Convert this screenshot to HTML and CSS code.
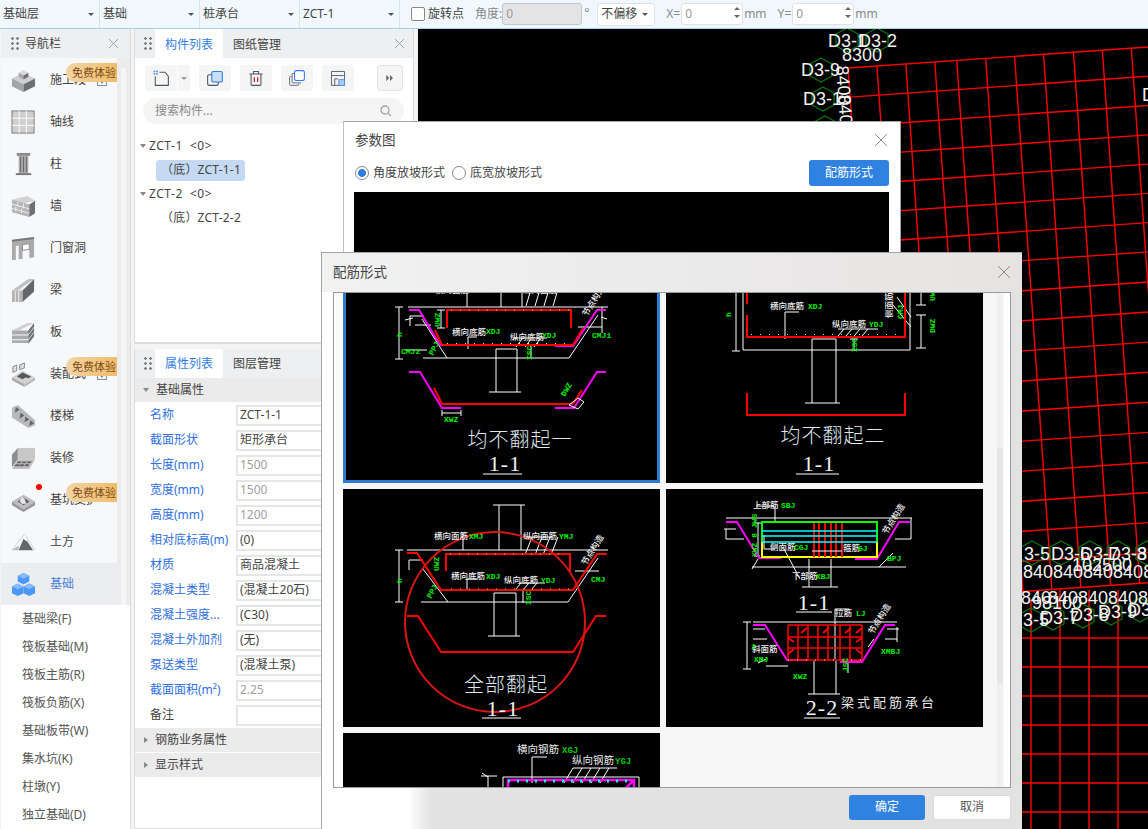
FILE: index.html
```html
<!DOCTYPE html>
<html lang="zh-CN">
<head>
<meta charset="utf-8">
<title>基础</title>
<link rel="stylesheet" href="styles.css">
</head>
<body>
<div class="app">
  <header class="topbar">
    <div class="sel">基础层<i class="caret"></i></div>
    <div class="sel">基础<i class="caret"></i></div>
    <div class="sel">桩承台<i class="caret"></i></div>
    <div class="sel">ZCT-1<i class="caret"></i></div>
    <span class="check"></span><span class="tlabel">旋转点</span>
    <span class="tlabel muted angle">角度:</span><span class="tinput disabled">0</span><span class="deg muted">°</span>
    <div class="offset">不偏移<i class="caret"></i></div>
    <span class="tlabel muted xl">X=</span>
    <span class="tinput spin">0<b class="spinner"><i></i><i></i></b></span><span class="muted unit">mm</span>
    <span class="tlabel muted yl">Y=</span>
    <span class="tinput spin">0<b class="spinner"><i></i><i></i></b></span><span class="muted unit">mm</span>
  </header>
  <main class="main">
    <aside class="nav">
      <div class="phead navhead"><span class="grip"></span><span class="ptitle">导航栏</span><span class="x"></span></div>
      <div class="navbody">
        <div class="navlist">
          <div class="navitem"><svg class="ni" viewBox="0 0 26 26"><path d="M1 11l12-6 12 6-12 6z" fill="#cfcfcf"/><path d="M1 11l12 6v8L1 19z" fill="#a5a5a5"/><path d="M25 11l-12 6v8l12-6z" fill="#6c6f74"/><path d="M8 5l5-3 5 3-5 3z" fill="#d8d8d8"/><path d="M8 5l5 3v4L8 9z" fill="#a5a5a5"/><path d="M18 5l-5 3v4l5-3z" fill="#6c6f74"/></svg><span>施工段</span><svg class="lock" viewBox="0 0 14 14"><rect x="1" y="5" width="12" height="8.500" fill="none" stroke="#5b6270"/><path d="M4 5V3a3 3 0 0 1 6 0v2" fill="none" stroke="#5b6270"/><circle cx="7" cy="9" r="1.300" fill="#5b6270"/></svg><em class="badge">免费体验</em></div>
          <div class="navitem"><svg class="ni" viewBox="0 0 26 26"><rect x="1" y="1" width="23" height="23" fill="#cfcfcf" stroke="#7a7a7a"/><path d="M8.500 1v23M16 1v23M1 8.500h23M1 16h23" stroke="#fff"/></svg><span>轴线</span></div>
          <div class="navitem"><svg class="ni" viewBox="0 0 26 26"><path d="M6 1h14v3H6z" fill="#8a8a8a"/><path d="M8 4h10v18H8z" fill="#a9a9a9"/><path d="M10 5v16M13 5v16M16 5v16" stroke="#666"/><path d="M5 22h16v2H5z" fill="#777"/></svg><span>柱</span></div>
          <div class="navitem"><svg class="ni" viewBox="0 0 26 26"><path d="M1 6l16-4 8 5-16 4z" fill="#d2d2d2"/><path d="M1 6l18 5v13L1 19z" fill="#b5b5b5"/><path d="M19 11l6-4v13l-6 4z" fill="#6c6f74"/><path d="M1 10.500l18 5M1 15l18 5M7 8v5M13 10v5M5 13v5M11 15v5" stroke="#eee"/></svg><span>墙</span></div>
          <div class="navitem"><svg class="ni" viewBox="0 0 26 26"><path d="M1 5l23-3v20l-5 1V8l-7 1v15H8V10L5 10.500V25L1 25z" fill="#aaa"/><path d="M12 9l7-1v6l-7 1z" fill="#fff" stroke="#8a8a8a"/><path d="M1 5l23-3" stroke="#777" stroke-width="2"/></svg><span>门窗洞</span></div>
          <div class="navitem"><svg class="ni" viewBox="0 0 26 26"><path d="M1 13L18 1h6L7 13z" fill="#c0c0c0"/><path d="M1 13h11v12H1z" fill="#b4b4b4"/><path d="M12 13L24 1v13L12 25z" fill="#63666b"/><path d="M4.500 13v12M8 13v12" stroke="#eee"/></svg><span>梁</span></div>
          <div class="navitem"><svg class="ni" viewBox="0 0 26 26"><path d="M1 11l16-8h7L8 11z" fill="#cfcfcf"/><path d="M1 11h17v4H1zM1 16h17v4H1zM1 21h17v3H1z" fill="#aaa"/><path d="M18 11l6-8v4l-6 8zM18 16l6-8v4l-6 8zM18 21l6-8v4l-6 8z" fill="#6c6f74"/></svg><span>板</span></div>
          <div class="navitem"><svg class="ni" viewBox="0 0 26 26"><path d="M1 16l11-7 13 7-11 7z" fill="#d2d2d2"/><path d="M1 16v3l13 7v-3z" fill="#aaa"/><path d="M25 16v3l-11 7v-3z" fill="#bbb"/><path d="M6 15l6-4 9 4-3 2-3-1-3 2z" fill="#55585d"/><path d="M2 5l4-2v6l-4 2zM9 3l5-2v5L9 8z" fill="#ddd" stroke="#888"/></svg><span>装配式</span><svg class="lock" viewBox="0 0 14 14"><rect x="1" y="5" width="12" height="8.500" fill="none" stroke="#5b6270"/><path d="M4 5V3a3 3 0 0 1 6 0v2" fill="none" stroke="#5b6270"/><circle cx="7" cy="9" r="1.300" fill="#5b6270"/></svg><em class="badge">免费体验</em></div>
          <div class="navitem"><svg class="ni" viewBox="0 0 26 26"><path d="M1 4l6-3 18 16v5l-7 3L1 14z" fill="#b9b9b9"/><path d="M5 3l4 3-5 3zM10 9l4 3-5 3zM15 13l4 3-5 3zM20 17l4 3-5 3z" fill="#63666b"/></svg><span>楼梯</span></div>
          <div class="navitem"><svg class="ni" viewBox="0 0 26 26"><path d="M7 2h18v12H7z" fill="#c7c7c7"/><path d="M7 2L1 9v13l6-8z" fill="#8d8d8d"/><path d="M7 14h18l-6 10H1z" fill="#c0c0c0"/><path d="M7 16h4l-1 2H6zM12 16h4l-1 2h-4zM17 16h5l-2 2h-4zM5 19h4l-1 2H3zM10 19h4l-1 2H8zM15 19h4l-1 2h-4z" fill="#5f6267"/></svg><span>装修</span></div>
          <div class="navitem"><i class="dot"></i><svg class="ni" viewBox="0 0 26 26"><path d="M1 14l12-7 12 7-12 8z" fill="#bdbdbd"/><path d="M1 14v4l12 7v-3zM25 14v4l-12 7v-3z" fill="#999"/><path d="M7 14l6-4 6 4-6 4z" fill="#55585d"/><path d="M11 9l3 2 2 5-4 1-3-3z" fill="#e4e4e4"/></svg><span>基坑支护</span><em class="badge">免费体验</em></div>
          <div class="navitem"><svg class="ni" viewBox="0 0 26 26"><path d="M1 21L14 4l11 17" fill="none" stroke="#cfcfcf"/><path d="M8 21l5-12 4 3 6 9z" fill="#64676c"/><path d="M1 21l7-5v5z" fill="#bcbcbc"/><path d="M13 9l1-5 3 8z" fill="#fff"/></svg><span>土方</span></div>
          <div class="navitem active"><svg class="ni" viewBox="0 0 26 26"><path d="M13 1l6 3v6l-6 3-6-3V4z" fill="#4b97f5"/><path d="M7 12l6 3v7l-6 3-6-3v-7z" fill="#4b97f5"/><path d="M19 12l6 3v7l-6 3-6-3v-7z" fill="#4b97f5"/><path d="M13 7l6-3-6-3-6 3zM7 18l6-3-6-3-6 3zM19 18l6-3-6-3-6 3z" fill="#86bbfa"/></svg><span>基础</span></div>
        </div>
        <div class="track"><div class="thumb"></div></div>
      </div>
      <ul class="sublist">
        <li>基础梁(F)</li><li>筏板基础(M)</li><li>筏板主筋(R)</li><li>筏板负筋(X)</li><li>基础板带(W)</li><li>集水坑(K)</li><li>柱墩(Y)</li><li>独立基础(D)</li>
      </ul>
    </aside>

    <div class="midcol">
      <section class="panel listpanel">
        <div class="phead"><span class="grip"></span><span class="tab on">构件列表</span><span class="tab">图纸管理</span><span class="x"></span></div>
        <div class="tools">
          <div class="tbtn split"><svg viewBox="0 0 22 22"><path d="M9 4h7l4 5v11H4V9" fill="none" stroke="#4a5568" stroke-width="1.300"/><path d="M2 2h5v5H2z" fill="#4a90e2"/><path d="M4.500 2v5M2 4.500h5" stroke="#fff"/></svg></div>
          <div class="tbtn arrowpart"><i class="caret"></i></div>
          <div class="tbtn"><svg viewBox="0 0 22 22"><rect x="7" y="3" width="13" height="13" rx="2" fill="#c9ddf5" stroke="#2f7de0" stroke-width="1.300"/><path d="M7 7H4a2 2 0 0 0-2 2v9a2 2 0 0 0 2 2h9a2 2 0 0 0 2-2v-2" fill="none" stroke="#4a5568" stroke-width="1.300"/></svg></div>
          <div class="tbtn"><svg viewBox="0 0 22 22"><path d="M3 6h16M8 6V3h6v3" fill="none" stroke="#4a5568" stroke-width="1.300"/><path d="M5 6v13a1 1 0 0 0 1 1h10a1 1 0 0 0 1-1V6" fill="none" stroke="#4a5568" stroke-width="1.300"/><path d="M9 10v6M13 10v6" stroke="#e02020" stroke-width="1.500"/></svg></div>
          <div class="tbtn"><svg viewBox="0 0 22 22"><rect x="8" y="2" width="12" height="12" rx="2" fill="#fff" stroke="#2f7de0" stroke-width="1.300"/><path d="M8 5.500H6a1 1 0 0 0-1 1V16a1 1 0 0 0 1 1h10" fill="none" stroke="#4a5568"/><path d="M4 9H3a1 1 0 0 0-1 1v9a1 1 0 0 0 1 1h9a1 1 0 0 0 1-1v-1" fill="none" stroke="#4a5568"/></svg></div>
          <div class="tbtn"><svg viewBox="0 0 22 22"><path d="M3 3h16v17H3z" fill="none" stroke="#4a5568" stroke-width="1.100"/><path d="M3 8h15" fill="none" stroke="#4a5568" stroke-width="1.100"/><path d="M7 20v-8h4" fill="none" stroke="#4a5568" stroke-width="1.100"/><rect x="12" y="13" width="7" height="7" fill="#a8c9f0" stroke="#4a90e2"/></svg></div>
          <div class="tbtn more"><svg viewBox="0 0 10 8"><path d="M0 0l4 4-4 4zM5 0l4 4-4 4z" fill="#666"/></svg></div>
        </div>
        <div class="search"><span>搜索构件...</span><svg viewBox="0 0 12 12" width="12" height="12"><circle cx="5" cy="5" r="4" fill="none" stroke="#a5a5a5" stroke-width="1.300"/><path d="M8 8l3 3" stroke="#a5a5a5" stroke-width="1.300"/></svg></div>
        <div class="tree">
          <div class="tnode"><i class="tri"></i>ZCT-1&nbsp;&nbsp;&lt;0&gt;</div>
          <div class="tleaf sel-leaf">（底）ZCT-1-1</div>
          <div class="tnode"><i class="tri"></i>ZCT-2&nbsp;&nbsp;&lt;0&gt;</div>
          <div class="tleaf">（底）ZCT-2-2</div>
        </div>
      </section>
      <section class="panel proppanel">
        <div class="phead"><span class="grip"></span><span class="tab on">属性列表</span><span class="tab">图层管理</span></div>
        <div class="group"><i class="tri"></i>基础属性</div>
        <div class="rows">
          <div class="row"><label>名称</label><span class="val">ZCT-1-1</span></div>
          <div class="row"><label>截面形状</label><span class="val">矩形承台</span></div>
          <div class="row"><label>长度(mm)</label><span class="val off">1500</span></div>
          <div class="row"><label>宽度(mm)</label><span class="val off">1500</span></div>
          <div class="row"><label>高度(mm)</label><span class="val off">1200</span></div>
          <div class="row"><label>相对底标高(m)</label><span class="val">(0)</span></div>
          <div class="row"><label>材质</label><span class="val">商品混凝土</span></div>
          <div class="row"><label>混凝土类型</label><span class="val">(混凝土20石)</span></div>
          <div class="row"><label>混凝土强度...</label><span class="val">(C30)</span></div>
          <div class="row"><label>混凝土外加剂</label><span class="val">(无)</span></div>
          <div class="row"><label>泵送类型</label><span class="val">(混凝土泵)</span></div>
          <div class="row"><label>截面面积(m²)</label><span class="val off">2.25</span></div>
          <div class="row"><label class="plain">备注</label><span class="val"></span></div>
        </div>
        <div class="group closed"><i class="tri side"></i>钢筋业务属性</div>
        <div class="group closed"><i class="tri side"></i>显示样式</div>
      </section>
    </div>

    <div class="canvas">
      <svg class="cad" viewBox="418 29 730 800" width="730" height="800">
        <g class="grid" transform="rotate(-4 848 68)">
          <path d="M848 68H1175M848 97.200H1175M848 126.400H1175M848 155.600H1175M848 184.800H1175M848 214H1175M848 243.200H1175M848 272.400H1175M848 302.400H1175M848 332.400H1175M848 362.400H1175M848 392.400H1175M848 422.400H1175M848 452.400H1175M848 482.400H1175M848 512.400H1175M848 542.400H1175M848 572.400H1175M848 602.400H1175"/>
          <path d="M848 68V602M877 68V602M906 68V602M935 68V602M957 68V602M986 68V602M1015 68V602M1044 68V602M1074 68V602M1103 68V602M1132 68V602M1161 68V602"/>
        </g>
        <path class="grid" d="M1000 638H1148M1000 667H1148M1000 696H1148M1000 725H1148M1000 754H1148M1000 783H1148M1000 812H1148M1031 600V829M1060 590V829M1089 590V829M1118 590V829"/>
        <g class="hex">
          <polygon points="847,28 858,34 858,46 847,52 836,46 836,34"/>
          <polygon points="877,28 888,34 888,46 877,52 866,46 866,34"/>
          <polygon points="821,58 832,64 832,76 821,82 810,76 810,64"/>
          <polygon points="823,87 834,93 834,105 823,111 812,105 812,93"/>
          <polygon points="825,116 836,122 836,134 825,140 814,134 814,122"/>
          <polygon points="1032,541 1043,547 1043,559 1032,565 1021,559 1021,547"/>
          <polygon points="1061,541 1072,547 1072,559 1061,565 1050,559 1050,547"/>
          <polygon points="1090,541 1101,547 1101,559 1090,565 1079,559 1079,547"/>
          <polygon points="1118,541 1129,547 1129,559 1118,565 1107,559 1107,547"/>
          <polygon points="1147,541 1158,547 1158,559 1147,565 1136,559 1136,547"/>
          <polygon points="1031,608 1042,614 1042,626 1031,632 1020,626 1020,614"/>
          <polygon points="1053,606 1064,612 1064,624 1053,630 1042,624 1042,612"/>
          <polygon points="1083,604 1094,610 1094,622 1083,628 1072,622 1072,610"/>
          <polygon points="1111,601 1122,607 1122,619 1111,625 1100,619 1100,607"/>
          <polygon points="1140,598 1151,604 1151,616 1140,622 1129,616 1129,604"/>
        </g>
        <g class="cadtxt">
          <text x="828" y="47">D3-1</text><text x="858" y="47">D3-2</text>
          <text x="842" y="61">8300</text>
          <text x="801" y="76">D3-9</text><text x="803" y="105">D3-1</text>
          <text transform="translate(836 66) rotate(86)">8400</text>
          <text transform="translate(838 95) rotate(86)">8400</text>
          <text x="1142" y="101">D</text>
          <text x="1024" y="560">3-5</text><text x="1051" y="560">D3-6</text><text x="1080" y="560">D3-7</text><text x="1108" y="560">D3-8</text><text x="1137" y="560">3</text>
          <text x="1023" y="578">84084084084084084</text>
          <text x="1072" y="571">102500</text>
          <text x="1021" y="604">840</text><text x="1048" y="604">8408408408408</text>
          <text x="1032" y="609">98100</text>
          <text x="1023" y="626">3-5</text><text x="1040" y="624">D3-7</text><text x="1070" y="621">D3-8</text><text x="1098" y="618">D3-9</text><text x="1128" y="616">D3-</text>
        </g>
      </svg>
    </div>
  </main>

  <div class="dlg param">
    <div class="dlgtitle">参数图<span class="x big"></span></div>
    <div class="paramopts">
      <span class="radio on"></span><span>角度放坡形式</span>
      <span class="radio"></span><span>底宽放坡形式</span>
      <button class="btn primary form">配筋形式</button>
    </div>
    <div class="blackbox"></div>
  </div>

  <div class="dlg forms">
    <div class="dlgtitle">配筋形式<span class="x big"></span></div>
    <div class="listbox">
      <div class="gallery">
        <div class="card picked">
          <svg class="draw" viewBox="0 0 317 238">
            <path class="w" d="M65 62H265M158 0V62M179 0V62"/>
            <path class="w" d="M124 46v16M183 40h50M183 61l6-20M192 61l6-20M201 61l6-20M210 61l6-20"/>
            <path class="w" d="M56 62V114M52 62h8M52 114h8M67 71h14M67 81V71M79 74l25 39M80 113H226M226 113l29-43M235 82h24M259 62v26M258 72l6 2M62 75l8-2M98 65v18M94 65h8M94 83h8M72 80h16M62 105h22"/>
            <path class="w" d="M153 104H174M153 104V147M174 104V147M146 147H178M188 100v12M184 100h8"/>
            <path class="w" d="M125 92h9M125 92v12M173 102l6-8M182 102l6-8M191 102l6-8M170 93h34"/>
            <path class="m" d="M66 65H76L97 100H118M212 101H230L254 65H263"/>
            <path class="r" d="M104 83V65H228V83M99 100H230M92 85l7 15M230 100l10-17"/>
            <path class="yd" d="M104 98.500H228M108 65h118"/>
            <path class="m" d="M66 127H77L99 163H118M212 163H231L254 127H263"/>
            <path class="r" d="M99 159H230M91 143l8 16M230 159l9-14"/>
            <path class="w" d="M99 165v6M118 165v6M99 168H118M226 160l9-7 6 4-6 7z"/>
            <path class="w" d="M140 229H179"/>
            <text class="tw" x="92" y="48">横向面筋</text><text class="tg" x="131" y="48">XMJ</text>
            <text class="tw" x="180" y="48">纵向面筋</text><text class="tg" x="216" y="48">YMJ</text>
            <text class="tw" transform="translate(244 72) rotate(-58)">节点构造</text>
            <text class="tw" x="109" y="90">横向底筋</text><text class="tg" x="143" y="89">XDJ</text>
            <text class="tw" x="167" y="95">纵向底筋</text><text class="tg" x="199" y="93">YDJ</text>
            <text class="tg" x="58" y="109">CMJ2</text><text class="tg" x="249" y="93">CMJ1</text>
            <text class="tg" transform="translate(59 92) rotate(-90)">h</text>
            <text class="tg" transform="translate(97 82) rotate(-90)">UWZ</text>
            <text class="tg" transform="translate(189 115) rotate(-90)">ISC</text>
            <text class="tg" transform="translate(90 111) rotate(-62)">PPJ</text>
            <text class="tg" x="101" y="177">XWZ</text>
            <text class="tg" transform="translate(222 152) rotate(-60)">DWZ</text>
            <text class="title" x="177" y="202">均不翻起一</text>
            <text class="secno" x="162" y="226">1-1</text>
          </svg>
        </div>
        <div class="card">
          <svg class="draw" viewBox="0 0 317 238">
            <path class="w" d="M77 0V105H244V0M146 94H170M146 94V158M170 94V158M139 158H174M70 0V106M66 106h8M119 67h14M119 67V94M184 94h8M188 94v12M227 60l18 22M231 52l14 20M250 70h10M255 70v33M250 103h10M250 60h10M255 40v20M172 91l6-7M180 91l6-7M188 91l6-7M196 91l6-7M172 84h40"/>
            <path class="r" d="M81 48V59M81 70V92H239V48M239 70V80M81 148V170H239V148"/>
            <path class="yd" d="M85 89.500H236"/>
            <path class="w" d="M130 229H173"/>
            <text class="tw" x="104" y="64">横向底筋</text><text class="tg" x="142" y="64">XDJ</text>
            <text class="tw" x="166" y="82">纵向底筋</text><text class="tg" x="203" y="82">YDJ</text>
            <text class="tw" transform="translate(226 73) rotate(-90)">侧面筋</text>
            <text class="tg" transform="translate(237 74) rotate(-90)">CMJ</text>
            <text class="tg" transform="translate(269 88) rotate(-90)">DWZ</text>
            <text class="tg" transform="translate(269 56) rotate(-90)">UWZ</text>
            <text class="tg" transform="translate(65 72) rotate(-90)">h</text>
            <text class="tg" transform="translate(191 107) rotate(-90)">ISC</text>
            <text class="title" x="167" y="198">均不翻起二</text>
            <text class="secno" x="153" y="226">1-1</text>
          </svg>
        </div>
        <div class="card">
          <svg class="draw" viewBox="0 0 317 238">
            <path class="w" d="M64 61H265M156 16V61M178 16V61M150 16H182M120 44v17M182 48h28M182 66l7-18M192 66l7-18M200 66l7-18M208 66l7-18"/>
            <path class="w" d="M56 61V113M52 61h8M52 113h8M66 71h14M66 81V71M80 80l25 33M78 113H225M225 113l30-44M151 104H173M151 104V147M173 104V147M145 147H177M180 102v12M232 82h24"/>
            <path class="w" d="M124 90h10M124 90v12M172 101l6-7M180 101l6-7M188 101l6-7M176 94h26"/>
            <path class="r" d="M64 64H74L98 101H230L254 65H264M103 82V65H227V82M64 127H75L98 163H230L253 127H263"/>
            <path class="yd" d="M107 65H224M108 100H226"/>
            <circle class="ring" cx="152" cy="133" r="90"/>
            <path class="w" d="M139 229H178"/>
            <text class="tw" x="91" y="50">横向面筋</text><text class="tg" x="126" y="50">XMJ</text>
            <text class="tw" x="180" y="50">纵向面筋</text><text class="tg" x="216" y="50">YMJ</text>
            <text class="tw" transform="translate(243 77) rotate(-58)">节点构造</text>
            <text class="tw" x="108" y="90">横向底筋</text><text class="tg" x="143" y="90">XDJ</text>
            <text class="tw" x="161" y="94">纵向底筋</text><text class="tg" x="198" y="94">YDJ</text>
            <text class="tg" x="248" y="93">CMJ</text>
            <text class="tg" transform="translate(59 94) rotate(-90)">h</text>
            <text class="tg" transform="translate(96 82) rotate(-90)">UWZ</text>
            <text class="tg" transform="translate(188 116) rotate(-90)">ISC</text>
            <text class="tg" transform="translate(88 110) rotate(-62)">PPJ</text>
            <text class="title" x="163" y="203">全部翻起</text>
            <text class="secno" x="160" y="227">1-1</text>
          </svg>
        </div>
        <div class="card">
          <svg class="draw" viewBox="0 0 317 238">
            <path class="w" d="M60 29H246M109 17v16M90 17h18M58 40h12M60 50V40M60 50h18M92 34V67M88 34h8M88 67h6M98 46v14h11M86 80l6-10M86 78H240M213 78l14-14M229 50h16M245 50V29M143 70V98M165 70V98M136 98H172M118 60l16 30"/>
            <path class="m" d="M60 33H71L93 69H115M189 70H211L233 33H244"/>
            <path class="yl" d="M96 53V68H211V53"/>
            <path class="bar" d="M148 32V68M153 32V68M159 32V68M165 32V68M170 32V68M176 32V68"/>
            <path class="gn" d="M96 53V33H211V53"/>
            <path class="cy" d="M96 42H211M96 47H211M96 53H211"/>
            <path class="w" d="M130 123H166M146 62h30"/>
            <path class="w" d="M87 133H231M81 133V180M77 133h8M77 180h8M87 140h12M87 150h14M92 174l8-4M100 177H122M114 160l8 12M208 150l-6 8M219 150h12M195 172h-10M148 172V205M170 172V205M142 205H174M182 172v12M221 140h12M231 138v15"/>
            <path class="w" d="M169 135V170M169 120h14M169 120v15"/>
            <path class="m" d="M87 136H99L121 171H142M174 173H196L219 136H229"/>
            <path class="gridr" d="M122 136H196M122 148H196M122 159H196M122 171H196M122 136V171M132 136V171M142 136V171M152 136V171M162 136V171M174 136V171M184 136V171M196 136V171"/>
            <path class="bar" d="M135 144l6-5M157 144l6-5M179 144l6-5M190 144l6-5M122 149l6 4M190 153l6-4M122 165l6-5M190 160l6 5"/>
            <path class="yd" d="M122 171H196"/>
            <path class="w" d="M138 229H174"/>
            <text class="tw" x="87" y="19">上部筋</text><text class="tg" x="115" y="19">SBJ</text>
            <text class="tw" x="104" y="61">侧面筋</text><text class="tg" x="128" y="61">CGJ</text>
            <text class="tw" x="177" y="62">箍筋</text><text class="tg" x="192" y="62">GJ</text>
            <text class="tw" x="126" y="90">下部筋</text><text class="tg" x="150" y="90">XBJ</text>
            <text class="tg" x="221" y="72">BPJ</text>
            <text class="tw" transform="translate(221 46) rotate(-58)">节点构造</text>
            <text class="tg" transform="translate(91 68) rotate(-90)">XWZ 8 JWS</text>
            <text class="tw" x="169" y="127">拉筋</text><text class="tg" x="190" y="127">LJ</text>
            <text class="tw" transform="translate(207 146) rotate(-58)">节点构造</text>
            <text class="tw" x="86" y="163">斜面筋</text><text class="tg" x="88" y="173">XMJ</text>
            <text class="tg" x="215" y="165">XMBJ</text>
            <text class="tg" x="127" y="190">XWZ</text>
            <text class="tg" transform="translate(182 183) rotate(-90)">JSC</text>
            <text class="tg" transform="translate(85 160)">1</text>
            <text class="name" x="175" y="218">梁式配筋承台</text>
            <text class="secno" x="148" y="121">1-1</text>
            <text class="secno" x="156" y="226">2-2</text>
          </svg>
        </div>
        <div class="card">
          <svg class="draw" viewBox="0 0 317 238">
            <path class="w" d="M160 70V44H296V70M189 24H204M189 24V50M230 35H274M221 50l9-15M230 50l9-15M239 50l9-15M248 50l9-15M257 50l9-15M138 43h16M145 43V70M139 40l6 4"/>
            <path class="mg" d="M165 62V47H291V62M282 56l8-8"/>
            <path class="cd" d="M165 48H291"/>
            <text class="tl" x="174" y="20">横向钢筋</text><text class="tgl" x="219" y="20">XGJ</text>
            <text class="tl" x="229" y="31">纵向钢筋</text><text class="tgl" x="272" y="31">YGJ</text>
          </svg>
        </div>
      </div>
      <div class="vscroll"><div class="vthumb"></div></div>
    </div>
    <div class="dlgfoot">
      <button class="btn primary">确定</button>
      <button class="btn ghost">取消</button>
    </div>
  </div>
</div>
</body>
</html>
```
FILE: styles.css
```css
* { box-sizing: border-box; }
html, body { margin: 0; padding: 0; }
body {
  width: 1148px; height: 829px; overflow: hidden;
  font: 12px/1.2 "Noto Sans", "Noto Sans CJK SC", sans-serif;
  color: #444; background: #f4f4f5;
}
.app { position: relative; width: 1148px; height: 829px; display: flex; flex-direction: column; }

/* top bar */
.topbar {
  height: 29px; flex: none; display: flex; align-items: center;
  background: #f0f8fd; border-bottom: 1px solid #a9d0f0;
}
.sel {
  width: 100px; height: 28px; padding-left: 3px; display: flex; align-items: center; justify-content: space-between;
  padding-right: 5px; border-right: 1px solid #d8e4ec; color: #444;
}
.caret { width: 0; height: 0; border: 3px solid transparent; border-top: 3px solid #555; border-bottom: 0; display: block; }
.check { width: 14px; height: 14px; margin-left: 11px; background: #fff; border: 1px solid #888; border-radius: 2px; }
.tlabel { margin-left: 3px; }
.muted { color: #8a8a8a; }
.unit { margin-left: 1px; }
.angle { margin-left: 11px; margin-right: 0; }
.tinput {
  height: 22px; background: #fff; border: 1px solid #dde2e8; border-radius: 3px;
  display: flex; align-items: center; padding-left: 3px; color: #999; position: relative;
}
.tinput.disabled { width: 80px; background: #e4e4e4; border-color: #b9c8da; }
.deg { margin-left: 2px; width: 13px; position: relative; top: -1px; }
.offset {
  width: 58px; height: 23px; background: #fff; border: 1px solid #dde2e8; border-radius: 3px;
  display: flex; align-items: center; justify-content: space-between; padding: 0 6px 0 3px; color: #444;
}
.xl { margin-left: 11px; margin-right: 1px; }
.yl { margin-left: 11px; margin-right: 1px; }
.spin { width: 62px; }
.spinner { position: absolute; right: 2px; top: 3px; display: flex; flex-direction: column; gap: 5px; }
.spinner i { width: 0; height: 0; border: 3px solid transparent; border-top: 0; border-bottom: 3px solid #666; display: block; }
.spinner i + i { border-bottom: 0; border-top: 3px solid #666; }

/* layout */
.main { flex: 1; display: flex; min-height: 0; }
.phead { height: 29px; flex: none; display: flex; align-items: center; background: #eeeff0; position: relative; }
.grip {
  width: 10px; height: 15px; margin-left: 8px; flex: none;
  background: radial-gradient(circle, #808080 1.2px, transparent 1.5px) 0 0 / 5px 5px;
}
.x { position: absolute; right: 9px; top: 10px; width: 9px; height: 9px;
  background: linear-gradient(45deg, transparent 46%, #a5a5a5 46%, #a5a5a5 54%, transparent 54%), linear-gradient(-45deg, transparent 46%, #a5a5a5 46%, #a5a5a5 54%, transparent 54%); }
.x.big { width: 12px; height: 12px; right: 12px; top: 13px; background: linear-gradient(45deg, transparent 46%, #888 46%, #888 54%, transparent 54%), linear-gradient(-45deg, transparent 46%, #888 46%, #888 54%, transparent 54%); }

/* nav */
.nav { width: 130px; flex: none; margin-left: 1px; display: flex; flex-direction: column; background: #fff; border-right: 1px solid #dcdcdc; }
.navhead .grip { margin-left: 9px; }
.navhead .ptitle { margin-left: 5px; padding-top: 1px; }
.navhead .x { right: 12px; }
.navbody { display: flex; flex: none; background: #e9e9ea; }
.navlist { width: 116px; flex: none; background: #f7f8fa; padding-top: 1px; }
.track { width: 13px; background: #ececec; position: relative; }
.thumb { position: absolute; left: 4px; top: 10px; width: 5px; bottom: 0; background: #f6f6f6; }
.navitem { position: relative; height: 42px; display: flex; align-items: center; color: #444; }
.navitem > span { margin-left: 14px; white-space: nowrap; }
.ni { width: 25px; height: 25px; margin-left: 10px; flex: none; }
.navitem.active { background: #ecedf0; }
.navitem.active > span { color: #4a7fd8; }
.lock { position: absolute; left: 96px; top: 17px; width: 10px; height: 10px; }
.badge {
  position: absolute; right: 0; top: 0; width: 51px; height: 19px; font-style: normal; font-size: 11px; color: #7d4a12;
  background: linear-gradient(90deg, #f3d3a5, #eebd6b); border-radius: 10px 0 0 10px;
  display: flex; align-items: center; justify-content: flex-end; white-space: nowrap; padding-right: 1px; overflow: hidden;
}
.navitem .badge { top: 4px; }
.dot { position: absolute; left: 35px; top: 5px; width: 6px; height: 6px; border-radius: 50%; background: #f00; }
.sublist { list-style: none; margin: 0; padding: 0 0 0 21px; flex: 1; background: #fff; }
.sublist li { height: 28px; display: flex; align-items: center; color: #555; }

/* middle panels */
.midcol { width: 287px; flex: none; padding: 0 4px 0 3px; display: flex; flex-direction: column; gap: 5px; }
.panel { background: #fff; border: 1px solid #dcdcdc; border-top: 0; }
.listpanel { height: 315px; flex: none; border-bottom: 2px solid #dcdcdc; }
.proppanel { flex: 1; }
.tab { height: 29px; display: flex; align-items: center; padding: 1px 10px 0; margin-left: 0; }
.listpanel .tab { padding-top: 3px; }
.tab.on { width: 68px; margin-left: 2px; background: #fff; color: #2f7de0; justify-content: center; padding-left: 0; padding-right: 0; }
.tools { display: flex; padding: 7px 0 0 10px; gap: 9px; height: 33px; }
.tbtn { width: 32px; height: 26px; background: #f5f5f5; border-radius: 3px; display: flex; align-items: center; justify-content: center; }
.tbtn svg { width: 18px; height: 18px; }
.tbtn.more svg { width: 8px; height: 6px; }
.split { border-radius: 3px 0 0 3px; }
.arrowpart { width: 12px; margin-left: -8px; border-radius: 0 3px 3px 0; }
.arrowpart .caret { border-top-color: #999; }
.more { width: 26px; margin-left: 14px; border: 1px solid #e4e4e4; }
.search {
  margin: 7px 0 0 8px; width: 261px; height: 26px; border-radius: 13px; background: #f5f5f5; color: #888;
  display: flex; align-items: center; justify-content: space-between; padding: 0 12px;
}
.tree { padding-top: 12px; }
.tnode { height: 20px; display: flex; align-items: center; padding-left: 5px; letter-spacing: .5px; }
.tri { width: 0; height: 0; border: 3px solid transparent; border-top: 4px solid #888; border-bottom: 0; margin-right: 3px; flex: none; display: block; }
.tri.side { border: 3px solid transparent; border-left: 4px solid #888; border-right: 0; margin-right: 7px; }
.tleaf { height: 21px; margin: 4px 0 3px 21px; width: 89px; display: flex; align-items: center; padding-left: 5px; border-radius: 3px; white-space: nowrap; letter-spacing: .2px; }
.sel-leaf { background: #c5daf2; }
.group { height: 24px; margin-top: 0; background: #ebebeb; display: flex; align-items: center; padding-left: 8px; }
.group .tri { margin-right: 7px; }
.group.closed { margin-top: 1px; padding-left: 9px; }
.rows { padding-top: 1px; margin-bottom: -1px; }
.row { height: 25px; display: flex; align-items: center; padding-left: 15px; }
.row label { width: 86px; flex: none; color: #2f70dd; white-space: nowrap; }
.row label.plain { color: #444; }
.val { width: 140px; height: 21px; border: 2px solid #e6e6e6; border-right: 0; display: flex; align-items: center; padding-left: 2px; white-space: nowrap; }
.val.off { color: #a0a0a0; }

/* canvas */
.canvas { flex: 1; background: #000; min-width: 0; overflow: hidden; }
.cad { display: block; }
.grid, .grid path { fill: none; stroke: #f00; stroke-width: 1.4; }
.hex polygon { fill: none; stroke: #0a7a0a; stroke-width: 1.2; }
.cadtxt text { fill: #f2f2f2; font: 18px "Liberation Sans", sans-serif; }

/* dialogs */
.dlg { position: absolute; }
.dlgtitle { position: relative; font-size: 13.500px; color: #444; }
.param { left: 343px; top: 121px; width: 558px; height: 200px; background: #fff; border: 1px solid #a5a5a5; border-bottom: 0; border-left-color: #c0c0c0; }
.param .dlgtitle { height: 38px; padding: 10px 0 0 11px; }
.param .x.big { right: 13px; top: 12px; }
.paramopts { display: flex; align-items: center; padding-left: 11px; height: 26px; gap: 4px; color: #444; }
.radio { width: 14px; height: 14px; border: 1px solid #888; border-radius: 50%; background: #fff; flex: none; margin-left: 3px; }
.radio:first-child { margin-left: 0; }
.radio.on { background: radial-gradient(circle, #2f7de0 3.6px, #fff 4.2px); }
.form { margin-left: auto; margin-right: 11px; width: 80px; height: 26px; }
.blackbox { margin: 6px 11px 0 10px; height: 80px; background: #000; }
.btn { font: inherit; border-radius: 3px; border: 0; }
.primary { background: #2f82e0; color: #fff; }
.ghost { background: #fff; border: 1px solid #dcdcdc; color: #555; }
.forms {
  left: 321px; top: 252px; width: 701px; height: 577px;
  background: linear-gradient(90deg, #fff 86px, #e2e2e2 109px);
  border-top: 1px solid #a5a5a5; border-left: 1px solid #a5a5a5;
  display: flex; flex-direction: column;
}
.forms .dlgtitle { height: 39px; flex: none; padding: 11px 0 0 11px; background: linear-gradient(90deg, #f1f1f1 , #e5e4e3); }
.forms .x.big { right: 12px; top: 13px; }
.listbox { margin-left: 11px; width: 678px; height: 496px; flex: none; border: 1px solid #9a9a9a; background: #fff; position: relative; overflow: hidden; }
.gallery { display: grid; grid-template-columns: 317px 317px; grid-auto-rows: 238px; gap: 6px; margin: -48px 0 0 9px; width: 652px; padding-right: 6px; background: #f7f7f7; }
.card { background: #000; position: relative; }
.picked { outline: 3px solid #2f7bd0; outline-offset: -3px; }
.draw { display: block; width: 317px; height: 238px; }
.vscroll { position: absolute; right: 0; top: 0; bottom: 0; width: 27px; background: linear-gradient(90deg, #f6f6f6 0, #f6f6f6 14px, #eeeeee 14px, #f2f2f2 20px, #fff 21px); }
.vthumb { position: absolute; left: 14px; top: 155px; width: 6px; height: 236px; background: #e6e6e6; border-radius: 3px; }
.dlgfoot { flex: 1; display: flex; justify-content: flex-end; align-items: flex-start; gap: 8px; padding: 7px 11px 0 0; }
.dlgfoot .btn { height: 25px; }
.dlgfoot .primary { width: 76px; }
.dlgfoot .ghost { width: 78px; }

/* drawing strokes */
.w { fill: none; stroke: #fff; stroke-width: 1; }
.r { fill: none; stroke: #f00; stroke-width: 2; }
.m { fill: none; stroke: #f0f; stroke-width: 2; }
.mg { fill: none; stroke: #f0f; stroke-width: 2.500; }
.yd { fill: none; stroke: #ff0; stroke-width: 1; stroke-dasharray: 1 8; }
.cd { fill: none; stroke: #0ff; stroke-width: 3; stroke-dasharray: 2 7; }
.yl { fill: none; stroke: #ff0; stroke-width: 2; }
.gn { fill: none; stroke: #0f0; stroke-width: 2; }
.cy { fill: none; stroke: #0ff; stroke-width: 1.500; }
.bar { fill: none; stroke: #f00; stroke-width: 2; }
.gridr { fill: none; stroke: #f00; stroke-width: 1.500; }
.ring { fill: none; stroke: #d91515; stroke-width: 2; }
.tw { fill: #f0f0f0; font: 500 8.500px "Noto Sans CJK SC", sans-serif; }
.tg { fill: #0e0; font: bold 8px "Liberation Mono", monospace; }
.tl { fill: #e8e8e8; font: 10.500px "Noto Sans CJK SC", sans-serif; }
.tgl { fill: #0c0; font: bold 9px "Liberation Mono", monospace; }
.title { fill: #dfe6ec; font: 300 20px "Noto Sans CJK SC", sans-serif; text-anchor: middle; letter-spacing: 1px; }
.secno { fill: #eef3f7; font: 22px "Liberation Serif", serif; text-anchor: middle; letter-spacing: 1px; }
.name { fill: #e8e8e8; font: 13px "Noto Sans CJK SC", sans-serif; letter-spacing: 3px; }
```
